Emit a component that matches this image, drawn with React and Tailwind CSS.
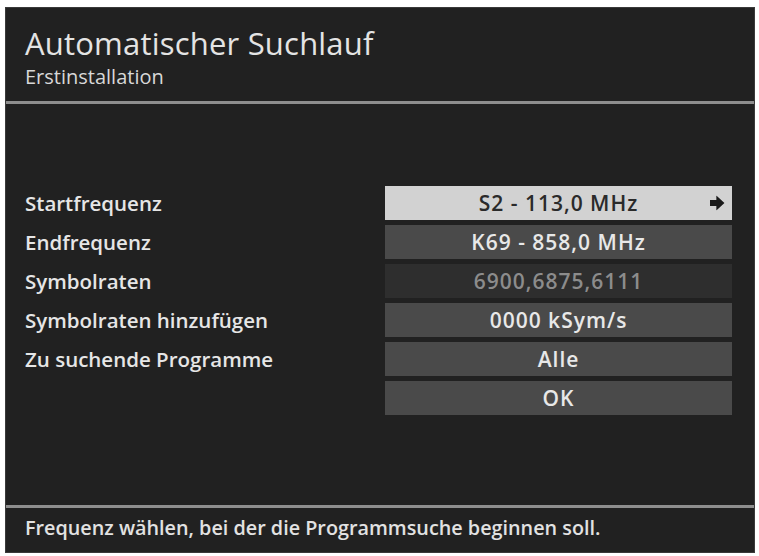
import React from "react";

const rows = [
  { label: "Startfrequenz", value: "S2 - 113,0 MHz", kind: "active" },
  { label: "Endfrequenz", value: "K69 - 858,0 MHz", kind: "normal" },
  { label: "Symbolraten", value: "6900,6875,6111", kind: "disabled" },
  { label: "Symbolraten hinzufügen", value: "0000 kSym/s", kind: "normal" },
  { label: "Zu suchende Programme", value: "Alle", kind: "normal" },
  { label: "", value: "OK", kind: "normal" },
];

function Arrow() {
  return (
    <svg width="15" height="15" viewBox="0 0 13 13" className="absolute right-[7px] top-1/2 -translate-y-1/2">
      <polygon points="0,4 5.5,4 5.5,0 12.5,6.5 5.5,13 5.5,9 0,9" fill="#1a1a1a" />
    </svg>
  );
}

export default function App() {
  return (
    <div className="w-[759px] h-[556px] bg-white pt-[7px] pl-[5px]" style={{ fontFamily: '"Open Sans", "DejaVu Sans", sans-serif' }}>
      <div className="w-[750px] h-[546px] bg-[#212121] border border-[#3a3a3a] flex flex-col">
        <div className="h-[93px] pl-[19px] pt-[17px] flex flex-col">
          <div className="text-[31px] leading-[36px] text-[#e4e4e4] tracking-[0.2px]">Automatischer Suchlauf</div>
          <div className="text-[20px] leading-[22px] mt-[5px] font-medium text-[#d8d8d8]">Erstinstallation</div>
        </div>
        <div className="h-[3px] bg-[#8e8e8e]" />
        <div className="flex-1 pt-[82px] pl-[19px] pr-[22px]">
          <div className="flex flex-col gap-[5px]">
            {rows.map((r, i) => (
              <div key={i} className="flex items-center h-[34px]">
                <div className="flex-1 text-[20.5px] font-semibold text-[#e6e6e6] leading-none">{r.label}</div>
                <div
                  className={
                    "relative w-[347px] h-[34px] flex items-center justify-center text-[21px] font-semibold tracking-[1px] leading-none " +
                    (r.kind === "active"
                      ? "bg-[#d2d2d2] text-[#2a2a2a]"
                      : r.kind === "disabled"
                      ? "bg-[#2e2e2e] text-[#8c8c8c]"
                      : "bg-[#4a4a4a] text-[#e8e8e8]")
                  }
                >
                  {r.value}
                  {r.kind === "active" && <Arrow />}
                </div>
              </div>
            ))}
          </div>
        </div>
        <div className="h-[3px] bg-[#8e8e8e]" />
        <div className="h-[44px] pl-[19px] flex items-center text-[19.8px] font-semibold text-[#e2e2e2] pb-[4px]">
          Frequenz wählen, bei der die Programmsuche beginnen soll.
        </div>
      </div>
    </div>
  );
}
